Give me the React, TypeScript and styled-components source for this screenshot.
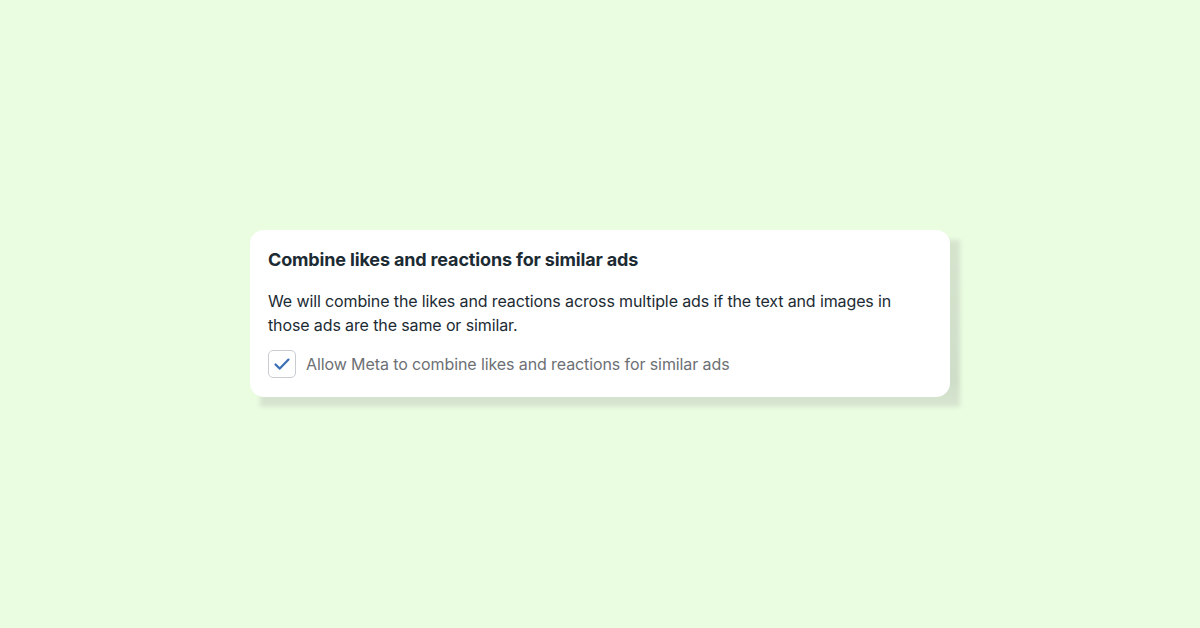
import React from "react";
import styled, { createGlobalStyle } from "styled-components";

const GlobalStyle = createGlobalStyle`
  html, body {
    margin: 0;
    padding: 0;
    background: #eafde1;
  }
  body {
    font-family: Inter, "Noto Sans", "Liberation Sans", sans-serif;
    -webkit-font-smoothing: antialiased;
  }
`;

const Page = styled.div`
  width: 1200px;
  height: 628px;
  display: flex;
  align-items: flex-start;
  justify-content: flex-start;
  padding: 230px 0 0 250px;
  box-sizing: border-box;
`;

// holds the card plus its offset, flat shadow slab
const Frame = styled.div`
  position: relative;
  isolation: isolate;

  &::before {
    content: "";
    position: absolute;
    left: 10px;
    top: 10px;
    right: -10px;
    bottom: -10px;
    z-index: -1;
    background: linear-gradient(180deg, #d6e4ce 0%, #cfdec8 85%, #d8e6d1 100%);
    filter: blur(2px);
  }
`;

const Card = styled.div`
  width: 700px;
  box-sizing: border-box;
  padding: 19px 18px 19px 18px;
  background: #ffffff;
  border-radius: 14px;
`;

const Title = styled.h2`
  margin: 0 0 18px 0;
  font-size: 18px;
  line-height: 22px;
  font-weight: 700;
  color: #1c2b33;
  letter-spacing: -0.15px;
`;

const Body = styled.p`
  margin: 0 0 13px 0;
  font-size: 16px;
  line-height: 24px;
  font-weight: 400;
  color: #1c2b33;
  letter-spacing: -0.12px;
  max-width: 640px;
`;

const Row = styled.label`
  display: flex;
  align-items: center;
  gap: 10px;
`;

const Box = styled.span<{ $checked: boolean }>`
  width: 28px;
  height: 28px;
  box-sizing: border-box;
  border: 1px solid #c9ccd1;
  border-radius: 5px;
  display: flex;
  align-items: center;
  justify-content: center;
  background: #fff;
  color: ${(p) => (p.$checked ? "#3a6fb5" : "transparent")};
`;

const Label = styled.span`
  font-size: 16px;
  line-height: 24px;
  color: #6d7075;
  letter-spacing: -0.1px;
`;

const Check = () => (
  <svg width="18" height="18" viewBox="0 0 18 18" fill="none">
    <path
      d="M2.5 9.5 L6.8 13.6 L15.5 4.6"
      stroke="currentColor"
      strokeWidth="2.2"
      strokeLinecap="round"
      strokeLinejoin="round"
    />
  </svg>
);

export default function App() {
  return (
    <>
      <GlobalStyle />
      <Page>
        <Frame>
          <Card>
            <Title>Combine likes and reactions for similar ads</Title>
            <Body>
              We will combine the likes and reactions across multiple ads if the
              text and images in those ads are the same or similar.
            </Body>
            <Row>
              <Box $checked>
                <Check />
              </Box>
              <Label>Allow Meta to combine likes and reactions for similar ads</Label>
            </Row>
          </Card>
        </Frame>
      </Page>
    </>
  );
}
